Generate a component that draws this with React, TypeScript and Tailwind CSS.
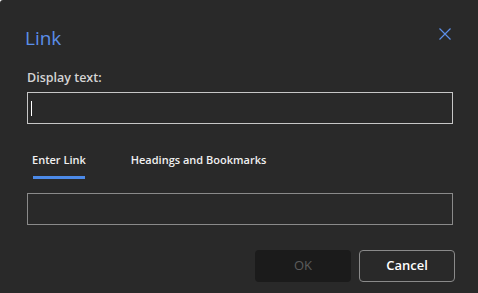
import React from 'react';

const font = { fontFamily: '"Open Sans", "Noto Sans", Arial, sans-serif' };

export default function App() {
  return (
    <div className="w-[478px] h-[293px] bg-[#292929] rounded-tl-[3px] overflow-hidden" style={font}>
      <div className="flex flex-col pl-[27px] pr-[25px]">
        <div className="flex items-start justify-between h-[64px]">
          <h1 className="mt-[26px] -ml-[2px] text-[19px] leading-[24px] font-medium text-[#5b8ee8]">Link</h1>
          <button className="mt-[28px] mr-[2px] w-[12px] h-[12px] text-[#5b8ee8]">
            <svg width="12" height="12" viewBox="0 0 12 12" fill="none" stroke="currentColor" strokeWidth="1.2">
              <path d="M0.5 0.5 L11.5 11.5 M11.5 0.5 L0.5 11.5" />
            </svg>
          </button>
        </div>
        <label className="text-[12.5px] leading-[17px] font-semibold text-[#d4d4d4] mt-[5px]">Display text:</label>
        <div className="mt-[6px] h-[32px] border border-[#c6c6c6] flex items-center pl-[3px]">
          <span className="w-px h-[15px] bg-white" />
        </div>
        <div className="flex mt-[28px] pl-[5px] text-[11px] font-semibold text-[#f0f0f0]">
          <div className="flex flex-col items-center">
            <span className="leading-[16px]">Enter Link</span>
            <span className="mt-[8px] h-[3px] w-[52px] bg-[#4c8ae8]" />
          </div>
          <span className="ml-[45px] leading-[16px]">Headings and Bookmarks</span>
        </div>
        <div className="mt-[14px] h-[32px] border border-[#8a8a8a]" />
        <div className="flex justify-end gap-[8px] mt-[25px] -mr-[2px]">
          <button className="w-[96px] h-[32px] rounded-[4px] bg-[#1b1b1b] text-[#5c5c5c] text-[13px]">OK</button>
          <button className="w-[96px] h-[32px] rounded-[4px] border border-[#8a8a8a] text-white text-[13px] font-semibold">Cancel</button>
        </div>
      </div>
    </div>
  );
}
